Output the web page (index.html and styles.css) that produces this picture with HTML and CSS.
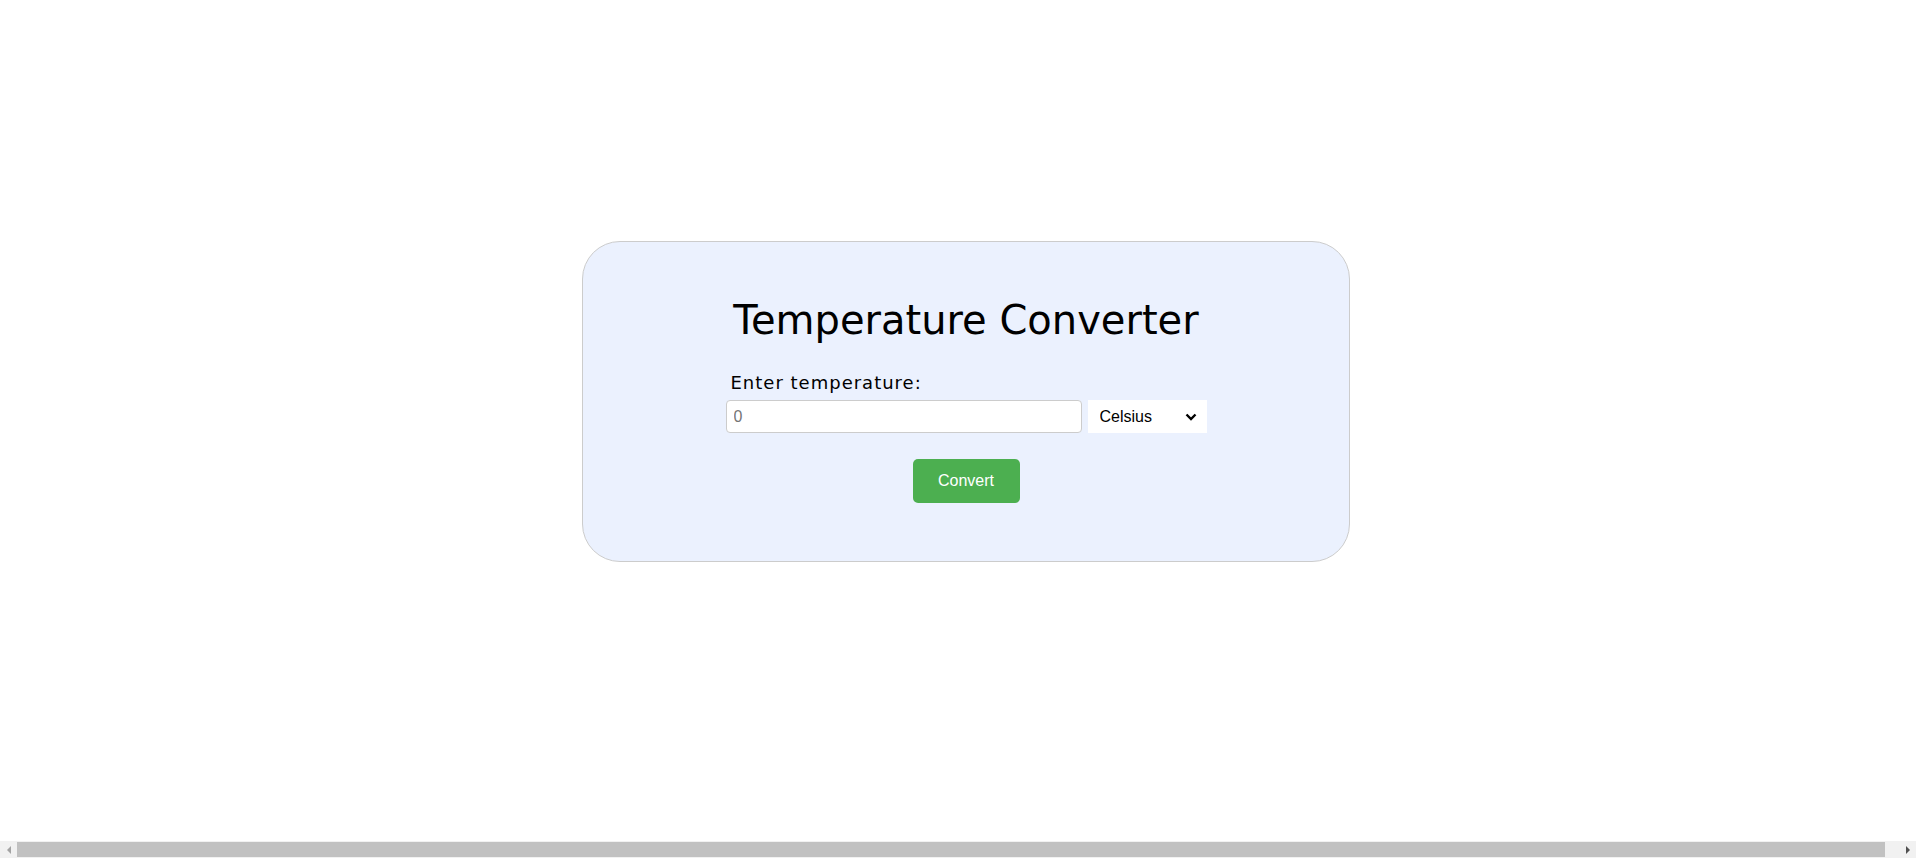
FILE: index.html
```html
<!DOCTYPE html>
<html>
<head>
	<meta charset="utf-8">
	<title>Temperature Converter</title>
	<link rel="stylesheet" href="styles.css">
</head>
<body>
<div class="page">
	<div class="card">
		<h1>Temperature Converter</h1>
		<form class="converter" onsubmit="return false;">
			<label for="temp">Enter temperature:</label>
			<div class="row">
				<input type="number" id="temp" placeholder="0">
				<span class="unit">
					<select id="unit">
						<option>Celsius</option>
						<option>Fahrenheit</option>
						<option>Kelvin</option>
					</select>
					<svg class="chev" width="12" height="8" viewBox="0 0 12 8"><path d="M1.5 1.5 L6 6 L10.5 1.5" fill="none" stroke="#000" stroke-width="2.4"/></svg>
				</span>
			</div>
			<button type="submit">Convert</button>
		</form>
	</div>
</div>
<!-- horizontal scrollbar, body is 100vw wide plus its margin -->
<div class="hscroll">
	<span class="arrow left"></span>
	<span class="thumb"></span>
	<span class="arrow right"></span>
</div>
</body>
</html>
```

FILE: styles.css
```css
body{width:100vw;margin:8px;background:#fff;font-family:"DejaVu Sans",sans-serif;}
.page{display:flex;justify-content:center;padding-top:233px;}
.card{box-sizing:border-box;width:768px;height:321px;background:#ebf1fe;border:1px solid #ccc;border-radius:38px;display:flex;flex-direction:column;align-items:center;}
.card h1{margin:54px 0 0;font-size:40px;font-weight:normal;color:#000;line-height:1.2;}
.converter{display:flex;flex-direction:column;width:481px;margin-top:27px;}
.converter label{font-size:18px;color:#000;margin-left:5px;line-height:24px;letter-spacing:1px;}
.row{display:flex;margin-top:5px;}
.row input{box-sizing:border-box;width:356px;height:33px;border:1px solid #ccc;border-radius:4px;padding:0 7px;font:16px "Liberation Sans",Arial,sans-serif;color:#000;background:#fff;outline:none;-moz-appearance:textfield;}
.row input::-webkit-inner-spin-button,.row input::-webkit-outer-spin-button{-webkit-appearance:none;margin:0;}
.row input::placeholder{color:#757575;}
.unit{position:relative;margin-left:6px;}
.unit select{-webkit-appearance:none;appearance:none;box-sizing:border-box;width:119px;height:33px;border:none;border-radius:0;background:#fff;padding:0 0 0 12px;font:16px "Liberation Sans",Arial,sans-serif;color:#000;outline:none;}
.chev{position:absolute;right:10px;top:13px;pointer-events:none;}
.converter button{align-self:center;box-sizing:border-box;width:107px;height:44px;margin-top:26px;border:none;border-radius:5px;background:#4caf50;color:#fff;font:16px "Liberation Sans",Arial,sans-serif;cursor:pointer;}
.hscroll{position:fixed;left:0;right:0;bottom:0;height:17px;background:#f1f1f1;display:flex;align-items:center;}
.hscroll .thumb{flex:1;height:15px;margin:0 14px 0 0;background:#c1c1c1;}
.arrow{width:17px;height:17px;display:flex;align-items:center;justify-content:center;}
.arrow.left::before{content:"";border:4px solid transparent;border-right:4px solid #a3a3a3;border-left:0;}
.arrow.right::before{content:"";border:4px solid transparent;border-left:4px solid #505050;border-right:0;}
```
